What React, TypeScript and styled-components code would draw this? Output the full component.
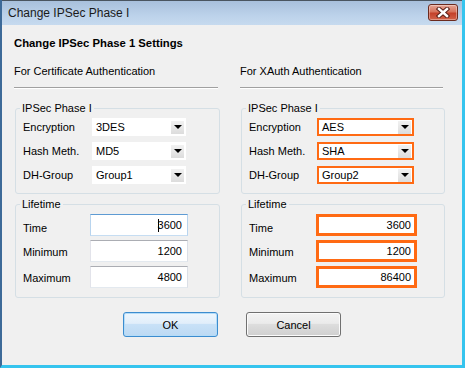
import React from 'react';
import styled, { createGlobalStyle } from 'styled-components';

const GlobalStyle = createGlobalStyle`
  html, body {
    margin: 0;
    padding: 0;
    width: 465px;
    height: 368px;
    overflow: hidden;
    background: #f0f0f0;
  }
  * {
    box-sizing: border-box;
  }
`;

const Window = styled.div`
  display: flex;
  flex-direction: column;
  width: 465px;
  height: 368px;
  background: #f0f0f0;
  border-left: 2px solid #3d6a98;
  border-right: 3px solid #35c4ee;
  border-bottom: 3px solid #35c4ee;
  font-family: 'Liberation Sans', Arial, sans-serif;
  font-size: 11px;
  color: #000;
`;

const TitleBar = styled.div`
  display: flex;
  align-items: center;
  justify-content: space-between;
  height: 25px;
  flex-shrink: 0;
  padding: 0 4px 0 6px;
  border-top: 1px solid #4a5560;
  background: linear-gradient(#a8c0dc, #bcd2ea 60%, #c6daef);
`;

const TitleText = styled.span`
  font-size: 12px;
  color: #1a1a1a;
`;

const CloseButton = styled.div`
  display: flex;
  align-items: center;
  justify-content: center;
  width: 30px;
  height: 17px;
  margin-top: -2px;
  border: 1px solid #6b2a1e;
  border-radius: 3px;
  background: linear-gradient(#e6a595, #d6735c 45%, #c4412a 55%, #d2634a);
  box-shadow: inset 0 0 0 1px rgba(255, 255, 255, 0.35);
`;

const Body = styled.div`
  display: flex;
  flex-direction: column;
  padding: 11px 12px 0 12px;
`;

const Heading = styled.div`
  font-weight: bold;
  font-size: 11.3px;
  line-height: 14px;
`;

const Columns = styled.div`
  display: grid;
  grid-template-columns: 206px 205px;
  column-gap: 20px;
  margin-top: 15px;
`;

const Column = styled.div`
  display: flex;
  flex-direction: column;
`;

const SectionLabel = styled.div`
  line-height: 13px;
`;

const Rule = styled.div`
  height: 1px;
  margin: 9px 2px 0 0;
  background: #a0a0a0;
  box-shadow: 0 1px 0 #fff;
`;

const GroupBox = styled.fieldset<{ $top: number }>`
  margin: ${({ $top }) => $top}px 0 0 1px;
  padding: 3px 0 9px 7px;
  border: 1px solid #d5dfe5;
  border-radius: 3px;
  display: flex;
  flex-direction: column;
  gap: 6px;
  min-width: 0;
`;

const Legend = styled.legend`
  margin-left: -3px;
  padding: 0 2px;
  line-height: 13px;
`;

const Rows = styled.div<{ $gap: number }>`
  display: flex;
  flex-direction: column;
  gap: ${({ $gap }) => $gap}px;
`;

const Row = styled.div<{ $labelWidth: number }>`
  display: grid;
  grid-template-columns: ${({ $labelWidth }) => $labelWidth}px auto;
  align-items: center;
`;

const Label = styled.span<{ $shift?: number }>`
  padding-top: ${({ $shift }) => $shift || 0}px;
`;

const Select = styled.div<{ $hot?: boolean }>`
  display: flex;
  align-items: center;
  justify-content: space-between;
  width: ${({ $hot }) => ($hot ? 97 : 94)}px;
  height: 18px;
  margin-left: ${({ $hot }) => ($hot ? -1 : 0)}px;
  padding: 0 1px 0 3px;
  background: #fff;
  border: ${({ $hot }) => ($hot ? '2px solid #ff6a13' : '1px solid #fff')};
`;

const Arrow = styled.div`
  display: flex;
  align-items: center;
  justify-content: center;
  width: 13px;
  height: 13px;
  background: linear-gradient(#f2f2f2, #dcdcdc);

  &::after {
    content: '';
    border-left: 4px solid transparent;
    border-right: 4px solid transparent;
    border-top: 4px solid #000;
  }
`;

const Input = styled.div<{ $hot?: boolean; $focus?: boolean }>`
  display: flex;
  align-items: center;
  justify-content: flex-end;
  width: ${({ $hot }) => ($hot ? 101 : 98)}px;
  height: 22px;
  padding-right: 5px;
  background: #fff;
  border: 1px solid;
  border-color: ${({ $focus }) =>
    $focus ? '#5e9bd3 #b8d4ee #c6ddf2 #b8d4ee' : '#abadb3 #dbdfe6 #e3e9ef #e2e3ea'};
  ${({ $hot }) => ($hot ? 'border: 3px solid #ff6a13; padding-right: 3px;' : '')}
`;

const Caret = styled.span`
  display: inline-block;
  width: 1px;
  height: 13px;
  margin-right: -1px;
  background: #000;
`;

const Buttons = styled.div`
  display: flex;
  justify-content: center;
  gap: 28px;
  margin-top: 14px;
`;

const Button = styled.button<{ $primary?: boolean }>`
  width: 95px;
  height: 25px;
  font-family: inherit;
  font-size: 11px;
  color: #000;
  border-radius: 3px;
  border: 1px solid ${({ $primary }) => ($primary ? '#3c8ccf' : '#707070')};
  background: ${({ $primary }) =>
    $primary
      ? 'linear-gradient(#eef6fd, #e1eefa 45%, #c8e1f7 50%, #bcd9f3)'
      : 'linear-gradient(#f3f3f3, #ebebeb 45%, #dddddd 50%, #cfcfcf)'};
  box-shadow: ${({ $primary }) =>
    $primary ? 'inset 0 0 0 1px #b4dcf8' : 'inset 0 0 0 1px #fbfbfb'};
`;

const CloseIcon = () => (
  <svg width="14" height="11" viewBox="0 0 14 11">
    <path d="M3 2 L11 9 M11 2 L3 9" stroke="#5a2018" strokeWidth="4.4" strokeLinecap="square" />
    <path d="M3 2 L11 9 M11 2 L3 9" stroke="#fff" strokeWidth="2.4" strokeLinecap="square" />
  </svg>
);

type Settings = {
  title: string;
  hot?: boolean;
  encryption: string;
  hash: string;
  dh: string;
  time: string;
  min: string;
  max: string;
};

const columns: Settings[] = [
  {
    title: 'For Certificate Authentication',
    encryption: '3DES',
    hash: 'MD5',
    dh: 'Group1',
    time: '3600',
    min: '1200',
    max: '4800',
  },
  {
    title: 'For XAuth Authentication',
    hot: true,
    encryption: 'AES',
    hash: 'SHA',
    dh: 'Group2',
    time: '3600',
    min: '1200',
    max: '86400',
  },
];

const SettingsColumn = ({ s }: { s: Settings }) => (
  <Column>
    <SectionLabel>{s.title}</SectionLabel>
    <Rule />
    <GroupBox $top={14}>
      <Legend>IPSec Phase I</Legend>
      <Rows $gap={6}>
        <Row $labelWidth={69}>
          <Label>Encryption</Label>
          <Select $hot={s.hot}>
            {s.encryption}
            <Arrow />
          </Select>
        </Row>
        <Row $labelWidth={69}>
          <Label>Hash Meth.</Label>
          <Select $hot={s.hot}>
            {s.hash}
            <Arrow />
          </Select>
        </Row>
        <Row $labelWidth={69}>
          <Label>DH-Group</Label>
          <Select $hot={s.hot}>
            {s.dh}
            <Arrow />
          </Select>
        </Row>
      </Rows>
    </GroupBox>
    <GroupBox $top={4}>
      <Legend>Lifetime</Legend>
      <Rows $gap={4}>
        <Row $labelWidth={67}>
          <Label $shift={6}>Time</Label>
          <Input $hot={s.hot} $focus={!s.hot}>
            {!s.hot && <Caret />}
            {s.time}
          </Input>
        </Row>
        <Row $labelWidth={67}>
          <Label $shift={2}>Minimum</Label>
          <Input $hot={s.hot}>{s.min}</Input>
        </Row>
        <Row $labelWidth={67}>
          <Label $shift={2}>Maximum</Label>
          <Input $hot={s.hot}>{s.max}</Input>
        </Row>
      </Rows>
    </GroupBox>
  </Column>
);

export default function App() {
  return (
    <>
      <GlobalStyle />
      <Window>
        <TitleBar>
          <TitleText>Change IPSec Phase I</TitleText>
          <CloseButton>
            <CloseIcon />
          </CloseButton>
        </TitleBar>
        <Body>
          <Heading>Change IPSec Phase 1 Settings</Heading>
          <Columns>
            {columns.map((s) => (
              <SettingsColumn key={s.title} s={s} />
            ))}
          </Columns>
          <Buttons>
            <Button $primary>OK</Button>
            <Button>Cancel</Button>
          </Buttons>
        </Body>
      </Window>
    </>
  );
}
